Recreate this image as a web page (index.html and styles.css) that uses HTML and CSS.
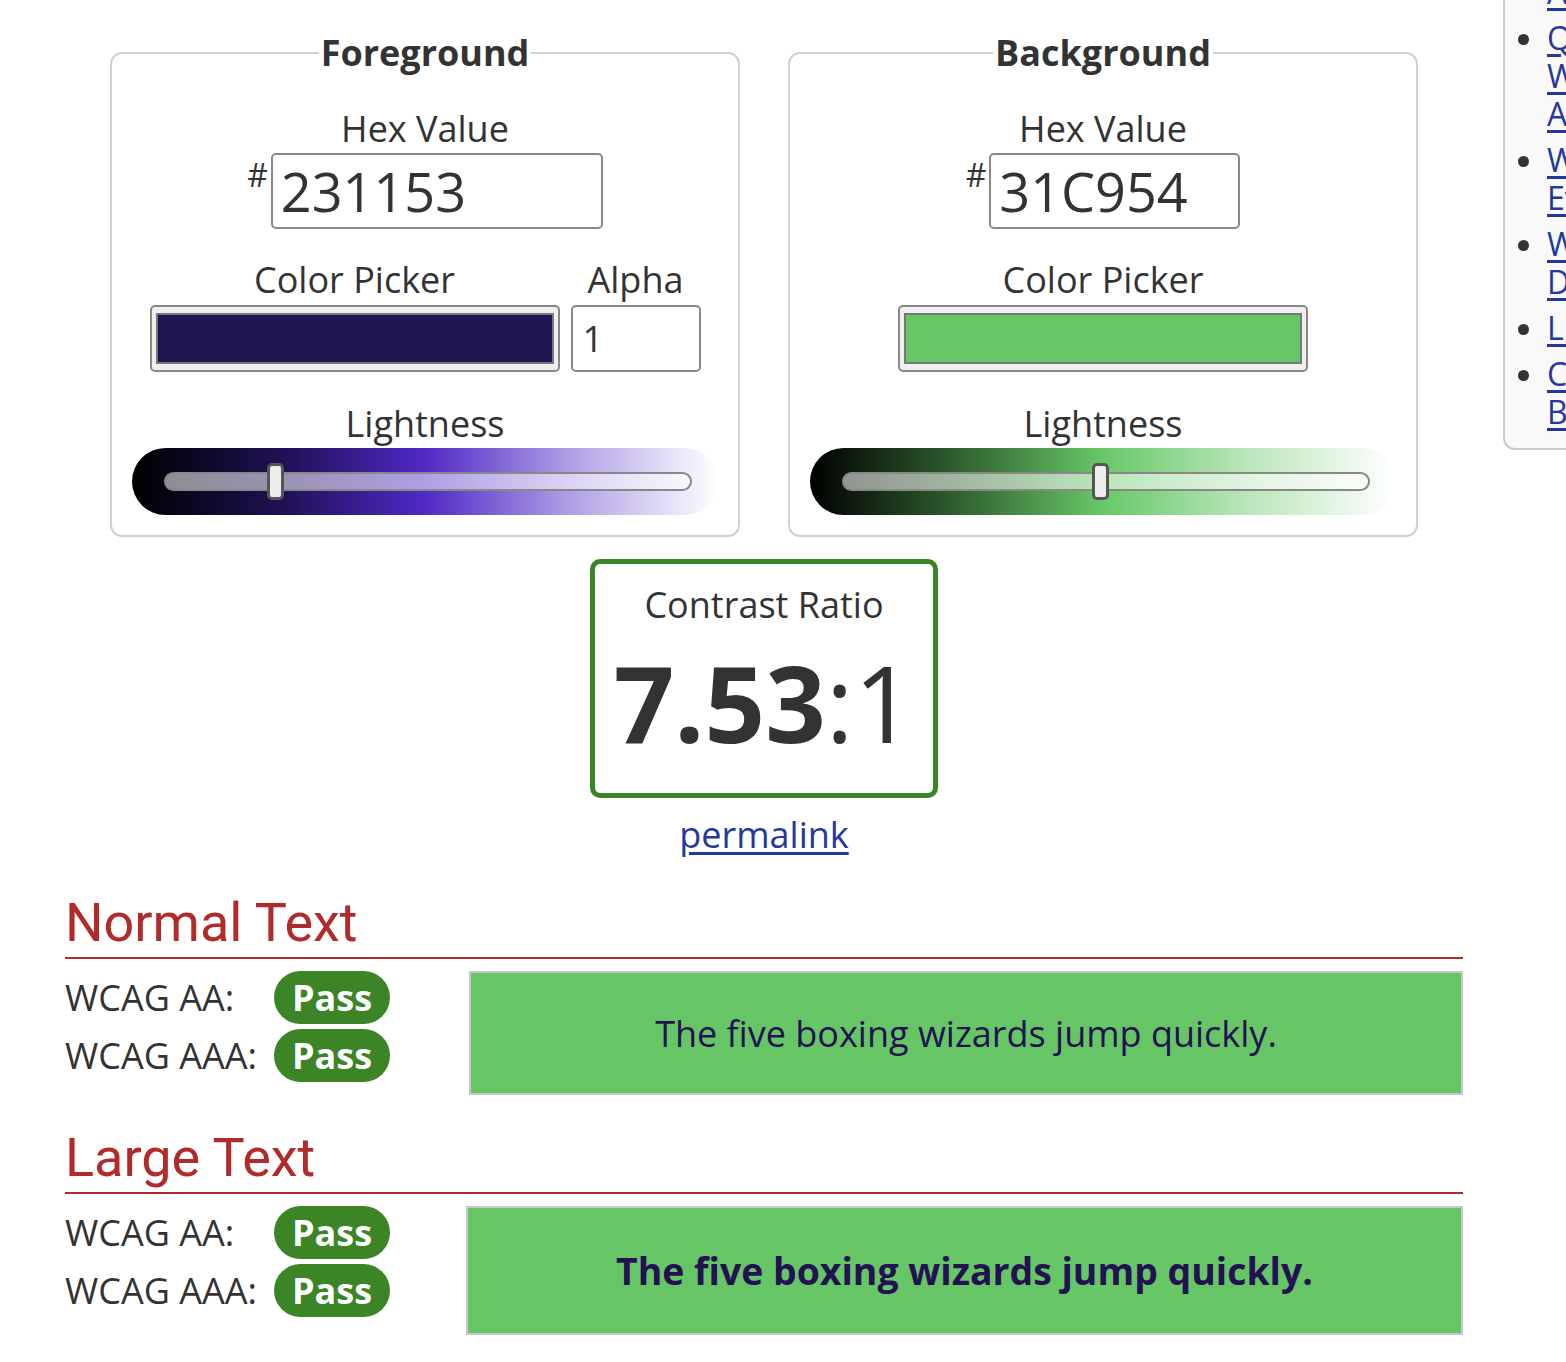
FILE: index.html
```html
<!DOCTYPE html>
<html lang="en">
<head>
<meta charset="utf-8">
<title>Contrast Checker</title>
<link rel="stylesheet" href="styles.css">
</head>
<body>
<div class="page">
  <main class="main">
    <div class="pickers">
      <fieldset class="panel">
        <legend>Foreground</legend>
        <div class="field">
          <label class="label" for="fghex">Hex Value</label>
          <div class="hexrow"><span class="hash">#</span><input class="hex" id="fghex" value="231153"></div>
        </div>
        <div class="pickrow">
          <div class="field">
            <span class="label">Color Picker</span>
            <div class="picker"><span class="swatch fg-swatch"></span></div>
          </div>
          <div class="field">
            <label class="label" for="alpha">Alpha</label>
            <input class="alpha" id="alpha" value="1">
          </div>
        </div>
        <div class="field">
          <span class="label">Lightness</span>
          <div class="slider fg-slider"><div class="track"><span class="thumb" style="left:21%"></span></div></div>
        </div>
      </fieldset>
      <fieldset class="panel">
        <legend>Background</legend>
        <div class="field">
          <label class="label" for="bghex">Hex Value</label>
          <div class="hexrow"><span class="hash">#</span><input class="hex hex-narrow" id="bghex" value="31C954"></div>
        </div>
        <div class="pickrow">
          <div class="field">
            <span class="label">Color Picker</span>
            <div class="picker"><span class="swatch bg-swatch"></span></div>
          </div>
        </div>
        <div class="field">
          <span class="label">Lightness</span>
          <div class="slider bg-slider"><div class="track"><span class="thumb" style="left:49%"></span></div></div>
        </div>
      </fieldset>
    </div>

    <div class="contrast">
      <div class="ratio-label">Contrast Ratio</div>
      <div class="ratio"><strong>7.53</strong>:1</div>
    </div>
    <div class="permalink"><a href="#">permalink</a></div>

    <section class="result">
      <h2 class="result-title">Normal Text</h2>
      <div class="result-row">
        <div class="checks">
          <div class="check"><span class="check-label">WCAG AA:</span><span class="badge">Pass</span></div>
          <div class="check"><span class="check-label">WCAG AAA:</span><span class="badge">Pass</span></div>
        </div>
        <div class="sample">The five boxing wizards jump quickly.</div>
      </div>
    </section>

    <section class="result">
      <h2 class="result-title">Large Text</h2>
      <div class="result-row">
        <div class="checks checks-large">
          <div class="check"><span class="check-label">WCAG AA:</span><span class="badge">Pass</span></div>
          <div class="check"><span class="check-label">WCAG AAA:</span><span class="badge">Pass</span></div>
        </div>
        <div class="sample sample-large">The five boxing wizards jump quickly.</div>
      </div>
    </section>
  </main>

  <aside class="sidebar">
    <ul class="links">
      <li><a href="#">Contrast and Color<br>Accessibility</a></li>
      <li><a href="#">Quick Reference:<br>Web<br>Accessibility Principles</a></li>
      <li><a href="#">WAVE Web Accessibility<br>Evaluation Tool</a></li>
      <li><a href="#">Web Accessibility for<br>Designers</a></li>
      <li><a href="#">Link Contrast Checker</a></li>
      <li><a href="#">Color Contrast and<br>Blindness</a></li>
    </ul>
  </aside>
</div>
</body>
</html>
```

FILE: styles.css
```css
html, body {
  margin: 0;
  padding: 0;
  overflow-x: hidden;
  background: #fff;
}

body {
  font-family: "Open Sans", "Noto Sans", sans-serif;
  font-size: 36px;
  color: #333;
}

.page {
  display: flex;
  align-items: flex-start;
  width: 1566px;
}

.main {
  flex: 0 0 1398px;
  margin-left: 65px;
  padding-top: 29px;
}

/* ---------- pickers ---------- */
.pickers {
  display: flex;
  justify-content: center;
  gap: 48px;
}

.panel {
  width: 630px;
  box-sizing: border-box;
  margin: 0;
  padding: 0 20px 20px;
  border: 2px solid #d0d0d0;
  border-radius: 12px;
  text-align: center;
}

.panel legend {
  margin: 0 auto;
  padding: 0 2px;
  font-size: 36px;
  line-height: 48px;
  font-weight: 700;
  color: #333;
}

.field {
  display: flex;
  flex-direction: column;
  align-items: center;
}

.label {
  display: block;
  line-height: 48px;
}

.panel > .field:first-of-type {
  margin-top: 28px;
}

.hexrow {
  display: flex;
  align-items: flex-start;
}

.hash {
  font-size: 32px;
  line-height: 32px;
  margin-top: 6px;
  margin-right: 3px;
}

.hex {
  width: 332px;
  height: 76px;
  box-sizing: border-box;
  border: 2px solid #888;
  border-radius: 5px;
  padding: 0 8px;
  font-family: "Open Sans", "Noto Sans", sans-serif;
  font-size: 54px;
  color: #333;
  background: #fff;
}

.hex-narrow {
  width: 251px;
}

.pickrow {
  display: flex;
  justify-content: center;
  gap: 11px;
  margin-top: 27px;
}

.picker {
  width: 410px;
  height: 67px;
  box-sizing: border-box;
  border: 2px solid #888;
  border-radius: 5px;
  background: #efefef;
  padding: 6px 4px;
  margin-top: 1px;
}

.swatch {
  display: block;
  height: 100%;
  box-sizing: border-box;
  border: 2px solid #777;
}

.fg-swatch { background: #201450; }
.bg-swatch { background: #66c666; }

.alpha {
  width: 130px;
  height: 67px;
  box-sizing: border-box;
  margin-top: 1px;
  border: 2px solid #888;
  border-radius: 5px;
  padding: 0 10px;
  font-family: "Open Sans", "Noto Sans", sans-serif;
  font-size: 36px;
  color: #333;
  background: #fff;
}

.pickrow + .field {
  margin-top: 28px;
}

.slider {
  align-self: stretch;
  height: 67px;
  border-radius: 34px;
  padding: 0 26px 0 32px;
  display: flex;
  align-items: center;
}

.fg-slider {
  background: linear-gradient(to right, #000 0%, #1e1052 25%, #5029c6 50%, #b0a0e6 75%, #fff 100%);
}

.bg-slider {
  background: linear-gradient(to right, #000 0%, #2f5f2f 25%, #68c868 50%, #bce6bc 75%, #fff 100%);
}

.track {
  position: relative;
  flex: 1;
  height: 19px;
  box-sizing: border-box;
  border: 2px solid #888;
  border-radius: 10px;
  background: rgba(255, 255, 255, 0.55);
}

.thumb {
  position: absolute;
  top: -11px;
  width: 17px;
  height: 37px;
  box-sizing: border-box;
  margin-left: -9px;
  border: 3px solid #555;
  border-radius: 5px;
  background: #eee;
}

/* ---------- contrast ---------- */
.contrast {
  width: 348px;
  height: 239px;
  box-sizing: border-box;
  margin: 22px auto 0;
  padding-top: 17px;
  border: 5px solid #3b8526;
  border-radius: 10px;
  text-align: center;
}

.ratio-label {
  line-height: 48px;
}

.ratio {
  font-size: 106px;
  line-height: 106px;
  margin-top: 20px;
  font-weight: 400;
}

.ratio strong {
  font-weight: 700;
}

.permalink {
  margin-top: 13px;
  padding-bottom: 1px;
  text-align: center;
  line-height: 48px;
}

.permalink a,
.links a {
  color: #25399b;
  text-decoration: underline;
  text-underline-offset: 4px;
}

/* ---------- results ---------- */
.result-title {
  margin: 31px 0 0;
  padding-bottom: 2px;
  border-bottom: 2px solid #b22b2b;
  font-family: Roboto, "Liberation Sans", sans-serif;
  font-size: 54px;
  line-height: 64px;
  font-weight: 400;
  color: #b22b2b;
}

.result-row {
  display: flex;
  align-items: flex-start;
  margin-top: 12px;
}

.checks {
  flex: 0 0 404px;
  display: flex;
  flex-direction: column;
  gap: 5px;
}

.checks-large {
  flex-basis: 401px;
}

.check {
  display: flex;
  align-items: center;
  height: 53px;
}

.check-label {
  width: 209px;
  line-height: 53px;
}

.badge {
  height: 53px;
  line-height: 53px;
  padding: 0 18px;
  border-radius: 27px;
  background: #3b8526;
  color: #fff;
  font-weight: 700;
}

.sample {
  flex: 1;
  height: 124px;
  box-sizing: border-box;
  display: flex;
  align-items: center;
  justify-content: center;
  border: 2px solid #c8c8c8;
  background: #66c666;
  color: #231153;
}

.sample-large {
  height: 129px;
  font-size: 37.4px;
  font-weight: 700;
}

/* ---------- sidebar ---------- */
.sidebar {
  flex: 0 0 420px;
  margin-left: 40px;
  margin-top: -65px;
  box-sizing: border-box;
  background: #f9f9f9;
  border-left: 2px solid #ccc;
  border-bottom: 2px solid #ccc;
  border-bottom-left-radius: 12px;
  padding-bottom: 17px;
}

.links {
  margin: 0;
  padding-left: 42px;
  font-size: 32px;
  line-height: 38px;
  color: #333;
}

.links li {
  white-space: nowrap;
  margin-bottom: 8px;
}

.links li:last-child {
  margin-bottom: 0;
}
```
